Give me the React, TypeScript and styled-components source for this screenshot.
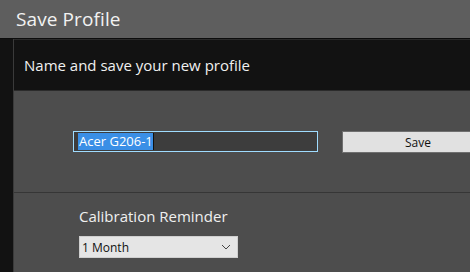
import React from 'react';
import styled, { createGlobalStyle } from 'styled-components';

const GlobalStyle = createGlobalStyle`
  html, body { margin: 0; padding: 0; background: #111; }
  body { font-family: 'Open Sans', 'Noto Sans', sans-serif; }
  #root { width: 470px; height: 272px; overflow: hidden; }
`;

const Window = styled.div`
  display: flex;
  flex-direction: column;
  width: 470px;
  height: 272px;
  background: #111;
  overflow: hidden;
`;

const TitleBar = styled.div`
  height: 38px;
  flex-shrink: 0;
  background: #5e5e5e;
  border-bottom: 1px solid #0c0c0c;
  display: flex;
  align-items: center;
  padding-left: 16px;
  color: #f2f2f2;
  font-size: 19px;
  letter-spacing: 0.1px;
`;

const Body = styled.div`
  flex: 1;
  display: flex;
  min-height: 0;
`;

const SideStrip = styled.div`
  width: 13px;
  flex-shrink: 0;
  background: #121212;
  border-right: 1px solid #3a3a3a;
`;

const Panel = styled.div`
  flex: 1;
  display: flex;
  flex-direction: column;
  background: #4d4d4d;
  min-width: 0;
  overflow: hidden;
`;

const Header = styled.div`
  height: 50px;
  flex-shrink: 0;
  background: #121212;
  border-top: 1px solid #2a2a2a;
  border-bottom: 1px solid #2b2b2b;
  display: flex;
  align-items: center;
  padding-left: 10px;
  color: #f0f0f0;
  font-size: 15px;
`;

const Section = styled.div<{ $height: number; $pad: string; $divider?: boolean }>`
  height: ${p => p.$height}px;
  flex-shrink: 0;
  padding: ${p => p.$pad};
  box-sizing: border-box;
  border-bottom: ${p => (p.$divider ? '1px solid #363636' : 'none')};
  display: flex;
  flex-direction: column;
`;

const Row = styled.div`
  display: flex;
  align-items: flex-start;
  gap: 24px;
`;

const NameInput = styled.div`
  width: 245px;
  height: 21px;
  flex-shrink: 0;
  box-sizing: border-box;
  border: 1px solid #9fdcff;
  background: #3d3d3d;
  display: flex;
  align-items: center;
  padding-left: 4px;
  font-size: 13px;
  color: #fff;
`;

const Selected = styled.span`
  background: #3a8fe6;
  padding: 0 0 0 1px;
  line-height: 17px;
  border-right: 1px solid #111;
`;

const SaveButton = styled.button`
  width: 152px;
  height: 22px;
  flex-shrink: 0;
  background: #e1e1e1;
  border: 1px solid #6f6f6f;
  font-family: inherit;
  font-size: 12px;
  color: #111;
  padding: 0;
`;

const Label = styled.div`
  color: #f0f0f0;
  font-size: 15px;
  margin-bottom: 10px;
`;

const Select = styled.div`
  width: 159px;
  height: 22px;
  box-sizing: border-box;
  background: #e5e5e5;
  border: 1px solid #cfcfcf;
  display: flex;
  align-items: center;
  justify-content: space-between;
  padding: 0 6px 0 2px;
  font-size: 12px;
  color: #111;
`;

export default function App() {
  return (
    <Window>
      <GlobalStyle />
      <TitleBar>Save Profile</TitleBar>
      <Body>
        <SideStrip />
        <Panel>
          <Header>Name and save your new profile</Header>
          <Section $height={102} $pad="40px 0 0 59px" $divider>
            <Row>
              <NameInput>
                <Selected>Acer G206-1</Selected>
              </NameInput>
              <SaveButton>Save</SaveButton>
            </Row>
          </Section>
          <Section $height={80} $pad="13px 0 0 65px">
            <Label>Calibration Reminder</Label>
            <Select>
              <span>1 Month</span>
              <svg width="10" height="6" viewBox="0 0 10 6">
                <path d="M1 1 L5 5 L9 1" fill="none" stroke="#444" strokeWidth="1" />
              </svg>
            </Select>
          </Section>
        </Panel>
      </Body>
    </Window>
  );
}
